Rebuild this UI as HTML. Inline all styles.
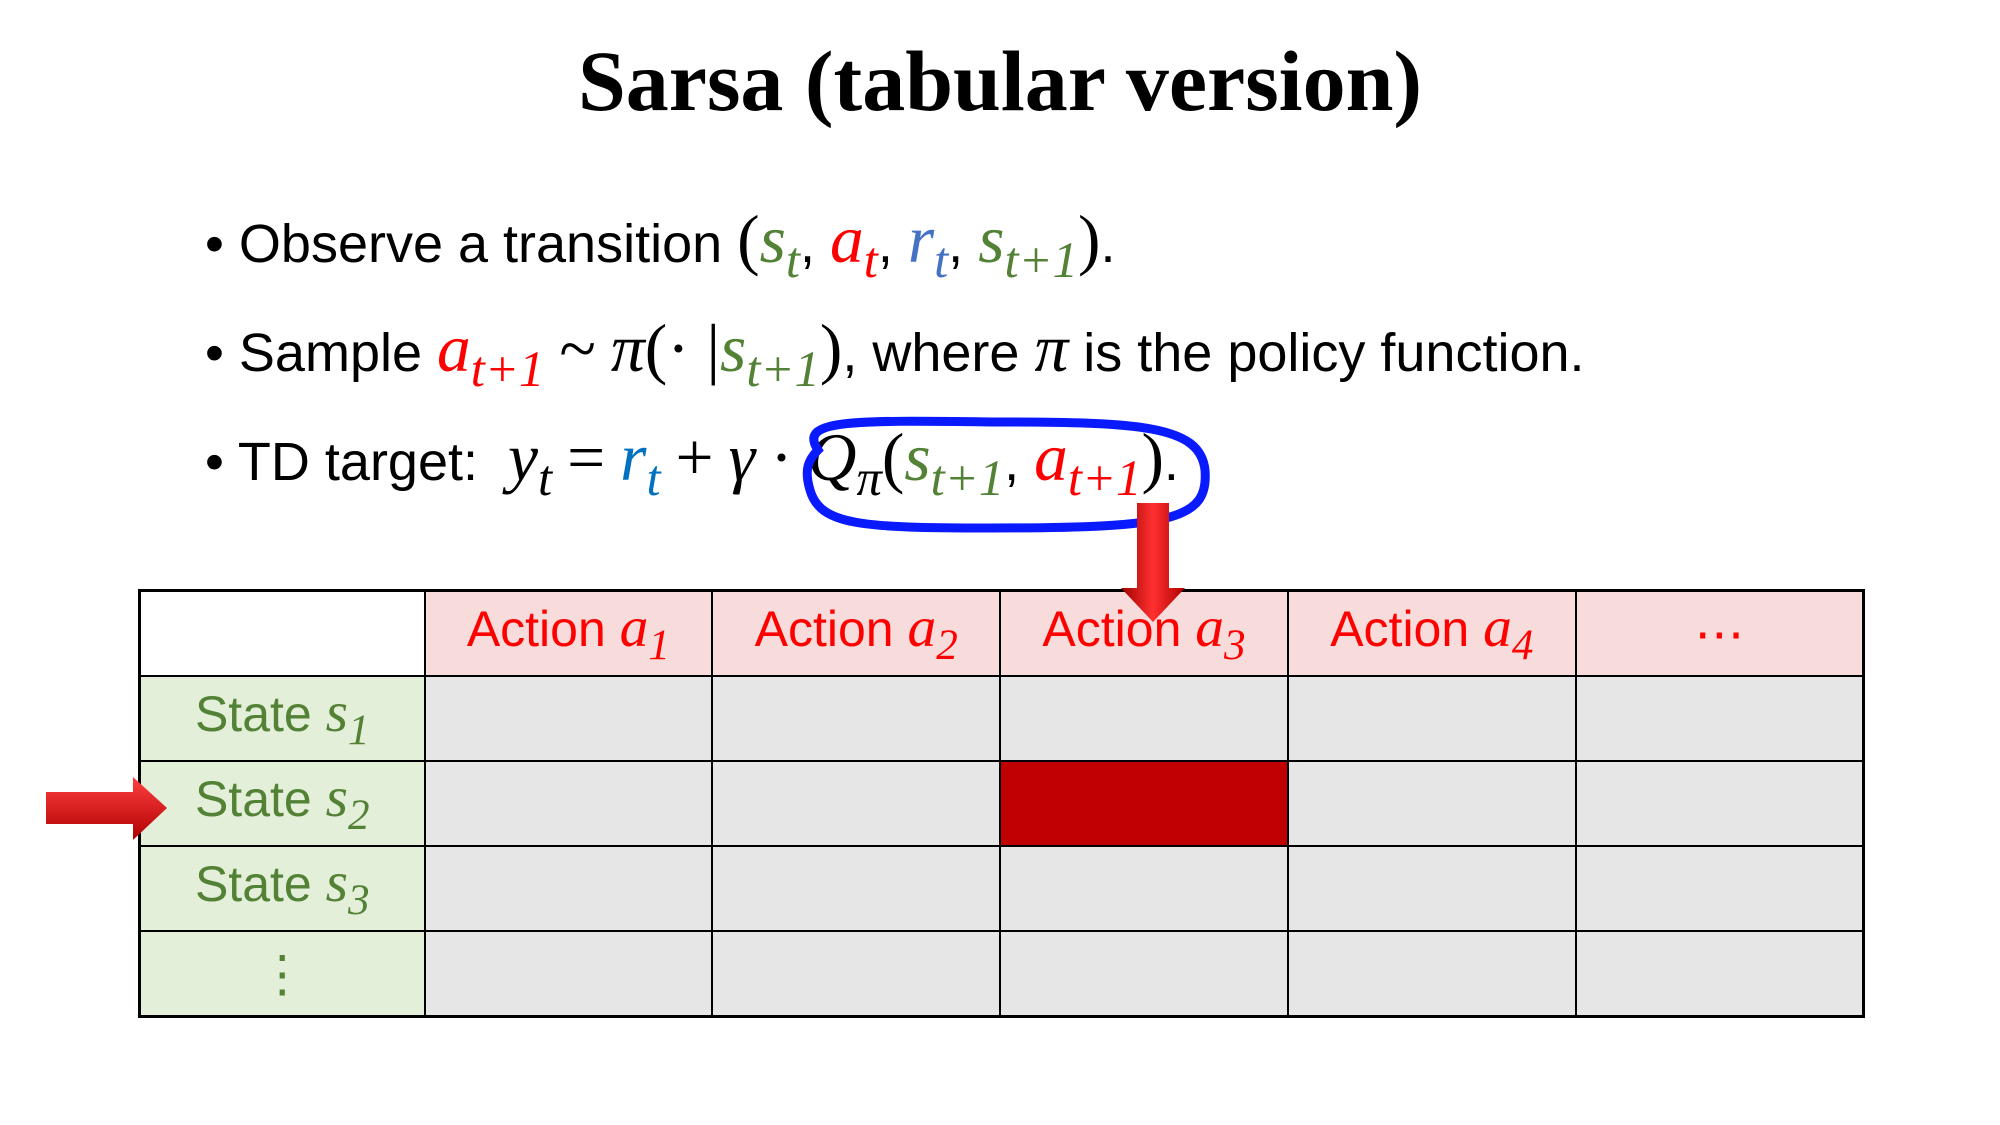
<!DOCTYPE html>
<html><head><meta charset="utf-8"><style>
body{margin:0;width:2000px;height:1125px;background:#fff;position:relative;overflow:hidden;font-family:"Liberation Sans",sans-serif}
.t{position:absolute;white-space:nowrap}
.m{font-family:"Liberation Serif",serif;font-style:italic;font-size:1.25em;line-height:1}
.n{font-family:"Liberation Serif",serif;font-size:1.25em;line-height:1}
.m .m,.m .n{font-size:1em}
sub{font-size:0.75em;vertical-align:-0.3em;font-style:italic}
.g{color:#538135}.r{color:#ff0000}.b{color:#4472c4}.bb{color:#0070c0}
table{position:absolute;left:138px;top:589px;border-collapse:collapse;table-layout:fixed;width:1727px;border:3px solid #000}
td{border:2px solid #000;height:83px;padding:0;text-align:center;font-size:50px;background:#e6e6e6}
td .m{font-size:1.15em}
tr:first-child td{background:#f8dcdc;color:#ff0000}
tr td:first-child{background:#e3efd9;color:#538135}
tr:first-child td:first-child{background:#fff}
</style></head><body>
<div class="t" style="left:0;width:2000px;text-align:center;top:31px;font-size:86px;font-weight:bold;font-family:'Liberation Serif',serif">Sarsa (tabular version)</div>
<div class="t" style="left:205px;top:206px;font-size:54px">• Observe a transition <span class="n">(</span><span class="m g">s<sub>t</sub></span>, <span class="m r">a<sub>t</sub></span>, <span class="m b">r<sub>t</sub></span>, <span class="m g">s<sub>t+1</sub></span><span class="n">)</span>.</div>
<div class="t" style="left:205px;top:315px;font-size:54px">• Sample <span class="m r">a<sub>t+1</sub></span> <span class="n">~</span> <span class="m">π</span><span class="n">(· |</span><span class="m g">s<sub>t+1</sub></span><span class="n">)</span>, where <span class="m">π</span> is the policy function.</div>
<div class="t" style="left:205px;top:424px;font-size:54px">• TD target:&nbsp; <span class="m">y<sub>t</sub></span> <span class="n">=</span> <span class="m bb">r<sub>t</sub></span> <span class="n">+</span> <span class="m">γ</span> <span class="n">·</span> <span class="m">Q<sub>π</sub></span><span class="n">(</span><span class="m g">s<sub>t+1</sub></span>, <span class="m r">a<sub>t+1</sub></span><span class="n">)</span>.</div>
<svg class="t" style="left:0;top:0" width="2000" height="1125">
<path d="M818,450 C798,420 848,420 990,422 C1140,422 1200,425 1205,470 C1209,520 1172,528 990,528 C860,528 820,525 810,490 C804,470 808,460 818,450 Z" fill="none" stroke="#0a1aff" stroke-width="9"/>
</svg>
<table>
<colgroup><col style="width:285px"><col><col><col><col><col></colgroup>
<tr><td></td><td>Action <span class="m">a<sub>1</sub></span></td><td>Action <span class="m">a<sub>2</sub></span></td><td>Action <span class="m">a<sub>3</sub></span></td><td>Action <span class="m">a<sub>4</sub></span></td><td>⋯</td></tr>
<tr><td>State <span class="m">s<sub>1</sub></span></td><td></td><td></td><td></td><td></td><td></td></tr>
<tr><td>State <span class="m">s<sub>2</sub></span></td><td></td><td></td><td style="background:#c00000"></td><td></td><td></td></tr>
<tr><td>State <span class="m">s<sub>3</sub></span></td><td></td><td></td><td></td><td></td><td></td></tr>
<tr><td>⋮</td><td></td><td></td><td></td><td></td><td></td></tr>
</table>
<svg class="t" style="left:0;top:0" width="2000" height="1125">
<defs><linearGradient id="v" x1="0" x2="1"><stop offset="0" stop-color="#a00000"/><stop offset="0.5" stop-color="#ff3030"/><stop offset="1" stop-color="#b00000"/></linearGradient>
<linearGradient id="h" x1="0" y1="0" x2="0" y2="1"><stop offset="0" stop-color="#ff4040"/><stop offset="1" stop-color="#b00000"/></linearGradient></defs>
<path d="M1137,503 H1169 V588 H1185 L1153,622 L1121,588 H1137 Z" fill="url(#v)"/>
<path d="M46,792 H133 V777 L167,808 L133,840 V824 H46 Z" fill="url(#h)"/>
</svg>
</body></html>
